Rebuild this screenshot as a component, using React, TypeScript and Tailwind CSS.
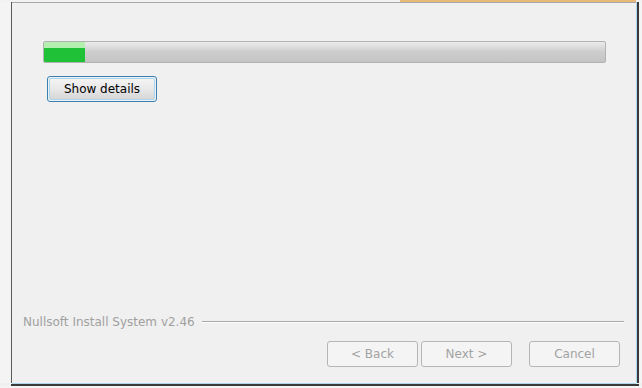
import React from "react";

const font = { fontFamily: '"DejaVu Sans", Tahoma, Verdana, sans-serif' };

function DisabledBtn({ label }: { label: string }) {
  return (
    <div className="w-[91px] h-[26px] rounded-[3px] border border-[#b5b5b5] bg-[#f4f4f4] flex items-center justify-center text-[12px] text-[#a3a3a3]">
      {label}
    </div>
  );
}

export default function App() {
  return (
    <div className="w-[642px] h-[388px] bg-[#f0f0f0] flex flex-col overflow-hidden" style={font}>
      {/* top frame remnant */}
      <div className="h-[2px] flex">
        <div className="flex-1 bg-[#f2f2f2]" />
        <div className="w-[236px] bg-[#e9b978]" />
        <div className="w-[6px] bg-[#f2f2f2]" />
      </div>
      <div className="flex flex-1 min-h-0">
        <div className="w-[11px] bg-[#f4f4f4]" />
        <div className="w-px bg-[#5a5a5a]" />
        <div className="flex-1 flex flex-col min-w-0">
          <div className="h-px bg-[#a8a8a8]" />
          <div className="flex-1 flex flex-col bg-[#f0f0f0]">
            {/* progress bar */}
            <div className="ml-[31px] mt-[38px] w-[563px] h-[22px] rounded-[2px] border border-[#b2b2b2] bg-gradient-to-b from-[#ececec] via-[#cdcdcd] to-[#c4c4c4] relative overflow-hidden">
              <div className="absolute left-0 top-0 bottom-0 w-[41px] flex flex-col">
                <div className="h-[6px] bg-[#b4efb0]" />
                <div className="flex-1 bg-[#1fc236]" />
              </div>
            </div>
            {/* Show details */}
            <div className="ml-[35px] mt-[13px] w-[110px] h-[26px] rounded-[3px] border border-[#3c7fb1] p-px">
              <div className="w-full h-full rounded-[2px] border border-[#a8d8f0] bg-gradient-to-b from-[#f4f4f4] via-[#e8e8e8] to-[#d6d6d6] flex items-center justify-center text-[12px] text-black">
                Show details
              </div>
            </div>
            <div className="flex-1" />
            {/* footer */}
            <div className="flex items-center ml-[11px] mr-[12px] h-[12px]">
              <span className="text-[12px] text-[#a0a0a0] whitespace-nowrap leading-none">Nullsoft Install System v2.46</span>
              <div className="flex-1 ml-[7px] flex flex-col">
                <div className="h-px bg-[#a8a8a8]" />
                <div className="h-px bg-white" />
              </div>
            </div>
            <div className="flex mt-[13px] ml-[315px] gap-[3px] h-[26px]">
              <DisabledBtn label="< Back" />
              <DisabledBtn label="Next >" />
              <div className="w-[11px]" />
              <DisabledBtn label="Cancel" />
            </div>
            <div className="h-[16px]" />
          </div>
        </div>
        <div className="w-px bg-[#a9d6ee]" />
        <div className="w-[2px] bg-[#3a3a3a]" />
        <div className="w-[3px] bg-[#f4f4f4]" />
      </div>
      <div className="h-px bg-[#a9d6ee] ml-[12px] mr-[6px]" />
      <div className="h-[2px] bg-[#3a3a3a] ml-[11px] mr-[3px]" />
      <div className="h-[2px] bg-[#f4f4f4]" />
    </div>
  );
}
